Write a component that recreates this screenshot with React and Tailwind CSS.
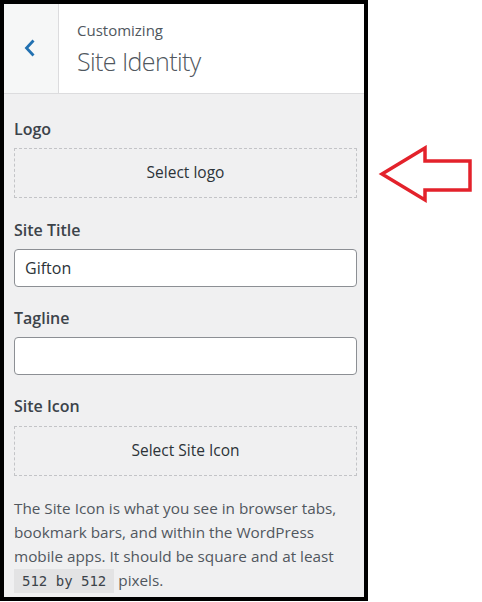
import React from 'react';

const font = { fontFamily: '"Open Sans", "Noto Sans", sans-serif' };

const SiteIdentity = () => {
  return (
    <div className="flex items-start bg-white w-[482px] h-[602px]" style={font}>
      {/* Customizer panel */}
      <div className="w-[368px] h-[601px] border-4 border-black bg-[#f0f0f1] flex flex-col overflow-hidden">
        {/* Header */}
        <div className="flex h-[90px] border-b border-[#dcdcde] bg-white shrink-0">
          <button className="w-[55px] bg-[#f6f7f7] border-r border-[#dcdcde] flex items-start justify-start pl-[19px] pt-[34px]">
            <svg width="14" height="20" viewBox="0 0 14 20" fill="none">
              <path d="M10.5 2.5 L3.5 10 L10.5 17.5" stroke="#2271b1" strokeWidth="2.8" />
            </svg>
          </button>
          <div className="pl-[18px] pt-[16px]">
            <div className="text-[15px] leading-[20px] text-[#50575e]">Customizing</div>
            <div className="text-[25px] leading-[34px] font-light text-[#50575e] mt-[4px] tracking-[-0.6px]">
              Site Identity
            </div>
          </div>
        </div>

        {/* Controls */}
        <div className="pl-[10px] pr-[7px] pt-[24px] text-[#3c434a]">
          {/* Logo */}
          <div className="text-[16px] leading-[22px] font-semibold">Logo</div>
          <button className="mt-[8px] w-full h-[50px] border border-dashed border-[#c3c4c7] text-[15.5px] text-[#2c3338]">
            Select logo
          </button>

          {/* Site Title */}
          <div className="mt-[21px] text-[16px] leading-[22px] font-semibold">Site Title</div>
          <input
            type="text"
            value="Gifton"
            readOnly
            className="mt-[8px] w-full h-[38px] px-[10px] bg-white border border-[#8c8f94] rounded-[4px] text-[16px] text-[#2c3338] outline-none"
          />

          {/* Tagline */}
          <div className="mt-[20px] text-[16px] leading-[22px] font-semibold">Tagline</div>
          <input
            type="text"
            readOnly
            className="mt-[8px] w-full h-[38px] px-[10px] bg-white border border-[#8c8f94] rounded-[4px] outline-none"
          />

          {/* Site Icon */}
          <div className="mt-[20px] text-[16px] leading-[22px] font-semibold">Site Icon</div>
          <button className="mt-[9px] w-full h-[50px] border border-dashed border-[#c3c4c7] text-[15.5px] text-[#2c3338]">
            Select Site Icon
          </button>

          <p className="mt-[20px] text-[15.3px] leading-[24px] text-[#50575e]">
            The Site Icon is what you see in browser tabs, bookmark bars, and within the WordPress mobile apps. It
            should be square and at least{' '}
            <code
              className="bg-[#e3e3e4] px-[8px] py-[4px] text-[14px] text-[#3c434a] whitespace-nowrap"
              style={{ fontFamily: '"DejaVu Sans Mono", monospace' }}
            >
              512 by 512
            </code>{' '}
            pixels.
          </p>
        </div>
      </div>

      {/* Red arrow pointing at the logo control */}
      <svg width="100" height="60" viewBox="0 0 100 60" className="mt-[145px] ml-[10px]">
        <polygon
          points="4,29 47,3 47,16 92,16 92,45 47,45 47,55"
          fill="none"
          stroke="#e3222b"
          strokeWidth="3.5"
          strokeLinejoin="miter"
        />
      </svg>
    </div>
  );
};

export default SiteIdentity;
